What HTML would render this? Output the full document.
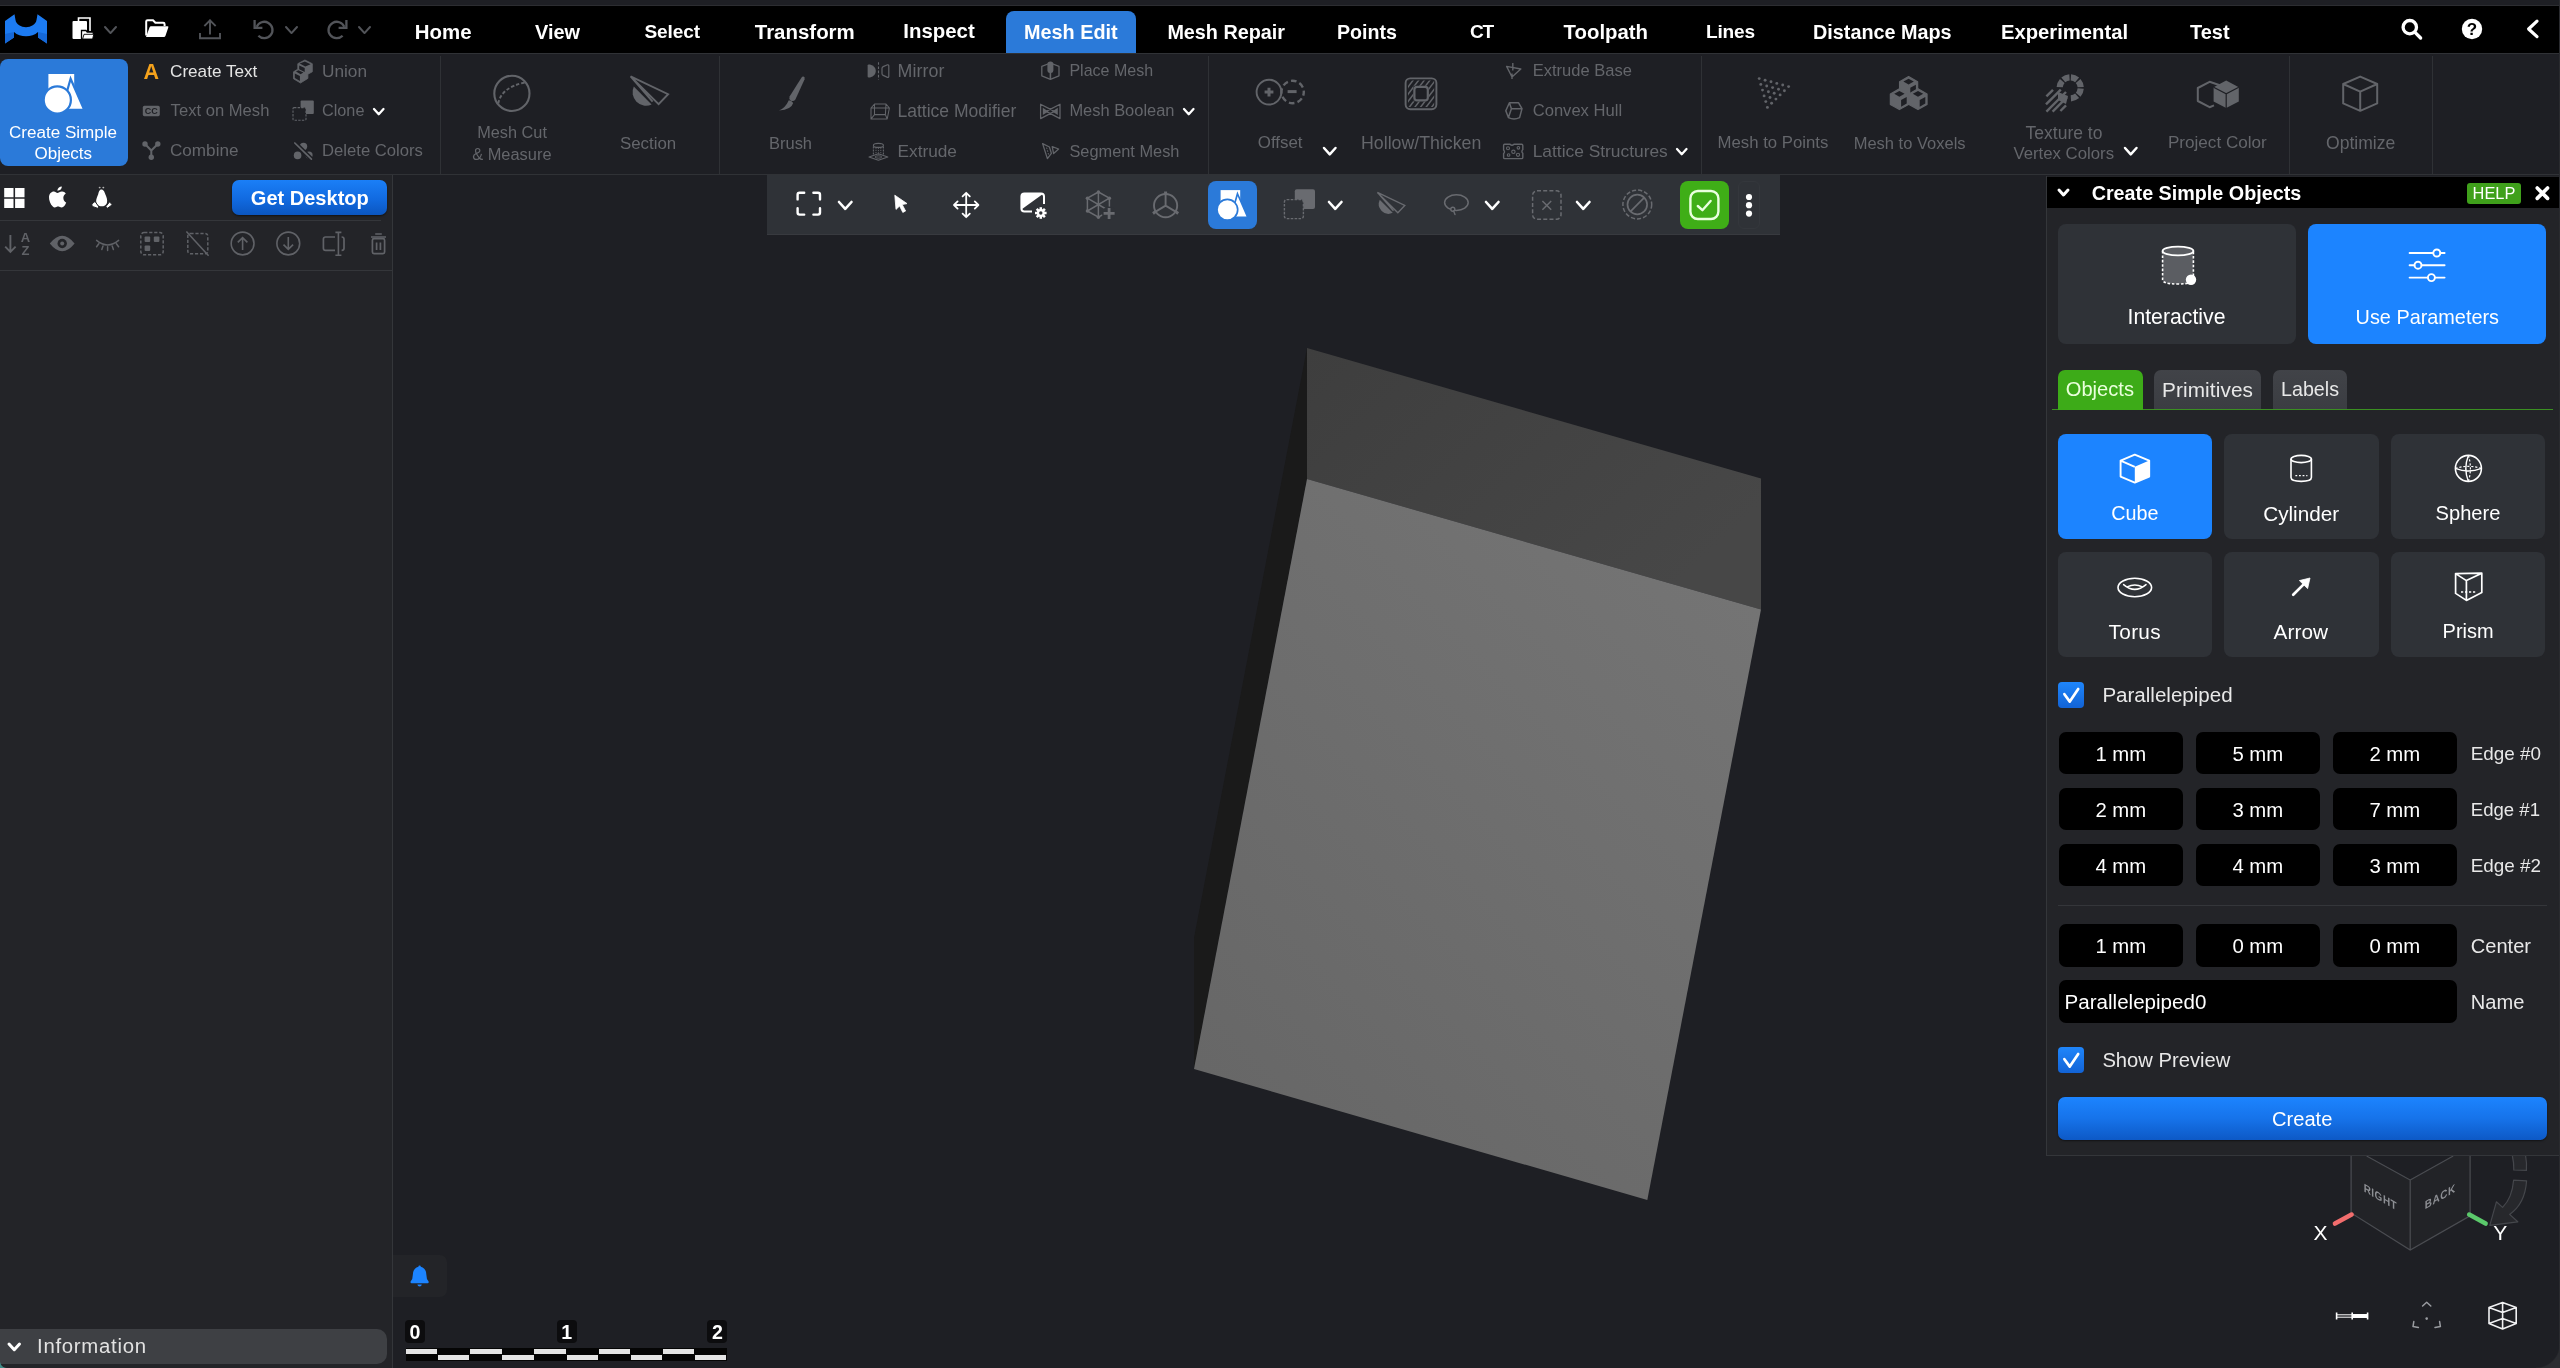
<!DOCTYPE html>
<html lang="en"><head><meta charset="utf-8"><title>MeshInspector - Create Simple Objects</title>
<style>
html,body{margin:0;padding:0;}
body{width:2560px;height:1368px;overflow:hidden;background:#1e1f24;position:relative;font-family:'Liberation Sans', sans-serif;}
#app{position:absolute;left:0;top:0;width:2560px;height:1368px;overflow:hidden;will-change:transform;}
#app div,#app span,#app svg{position:absolute;}
#app span{white-space:pre;}
#app svg{overflow:visible;}
</style></head>
<body><div id="app">
<div style="left:0px;top:0px;width:2560px;height:5px;background:#1e1f24;"></div>
<div style="left:0px;top:5px;width:2560px;height:1px;background:#2c2d31;"></div>
<div style="left:0px;top:6px;width:2560px;height:47px;background:#000;"></div>
<div style="left:0px;top:53px;width:2560px;height:1px;background:#303236;"></div>
<div style="left:0px;top:54px;width:2560px;height:120px;background:#1e1f24;"></div>
<div style="left:0px;top:174px;width:2560px;height:1px;background:#303236;"></div>
<svg style="left:0;top:0" width="2560" height="1368" viewBox="0 0 2560 1368"><defs><linearGradient id="gf" x1="0.1" y1="1" x2="0.9" y2="0"><stop offset="0" stop-color="#666666"/><stop offset="1" stop-color="#757575"/></linearGradient><linearGradient id="gt" x1="0" y1="0" x2="1" y2="0.6"><stop offset="0" stop-color="#3e3e3e"/><stop offset="1" stop-color="#474747"/></linearGradient></defs><polygon points="1307,348 1307,479 1194,1069 1194,938" fill="#1a1a1a"/><polygon points="1307,348 1761,478.5 1761,609.5 1307,479" fill="url(#gt)"/><polygon points="1307,479 1761,609.5 1647.3,1200 1194,1069" fill="url(#gf)"/></svg>
<div style="left:0px;top:175px;width:392px;height:1193px;background:#232428;"></div>
<div style="left:392px;top:175px;width:1px;height:1193px;background:#34363a;"></div>
<svg style="left:0;top:0" width="60" height="53" viewBox="0 0 60 53"><path d="M5,21 L14.5,14.2 L15.5,20 C17,29.5 35,29.5 36.5,20 L37.5,14.2 L47,21 L47,43.6 L38,37.6 L38,32 C32,37.8 20,37.8 14,32 L14,37.6 L5,43.6 Z" fill="#1c7bf2"/><path d="M5,34 L14,32 L14,37.6 L5,43.6 Z M47,34 L38,32 L38,37.6 L47,43.6 Z" fill="#1568d8"/></svg>
<svg style="left:70px;top:15px" width="26" height="26" viewBox="70 15 26 26"><path d="M78.5,21 V18 H90 V31" fill="none" stroke="#fff" stroke-width="1.6"/><rect x="72.5" y="21" width="14.5" height="18" rx="1" fill="#fff"/><path d="M81.5,39.5 V30.5 H86 L87.2,32 H93.3 V39.5 Z" fill="#fff" stroke="#000" stroke-width="1.3"/><path d="M82.6,39 L84,34.3 H93.8 L92.6,39 Z" fill="#fff" stroke="#000" stroke-width="0.9"/></svg>
<svg style="left:102.50px;top:25.48px;" width="15" height="10.05" viewBox="0 0 15 10.05"><path d="M2 2 L7.5 8.05 L13 2" fill="none" stroke="#525459" stroke-width="2" stroke-linecap="round" stroke-linejoin="round"/></svg>
<svg style="left:143px;top:17px" width="28" height="24" viewBox="143 17 28 24"><path d="M146.2,35.5 V21.6 Q146.2,20.2 147.6,20.2 H153 L155.4,22.8 H163.2 Q164.6,22.8 164.6,24.2 V26" fill="none" stroke="#fff" stroke-width="2"/><path d="M146,37 L149.6,27.2 Q150,26.2 151,26.2 H167.4 Q168.8,26.2 168.3,27.5 L165.4,36 Q165,37 164,37 Z" fill="#fff"/></svg>
<svg style="left:197px;top:17px" width="28" height="26" viewBox="197 17 28 26"><path d="M210,33.5 V20.5 M205,25.3 L210,20.3 L215,25.3 M200,34 V38.2 H220 V34" fill="none" stroke="#525459" stroke-width="1.9" stroke-linecap="square" stroke-linejoin="miter"/></svg>
<svg style="left:250px;top:15px" width="28" height="28" viewBox="250 15 28 28"><g transform="translate(264,29.5)"><path d="M-7.3,-2.6 A8.2,8.2 0 1 1 -5.6,6.2" fill="none" stroke="#525459" stroke-width="2.3"/><path d="M-9.4,-9.6 V-1.6 H-1.6" fill="none" stroke="#525459" stroke-width="2.3"/></g></svg>
<svg style="left:283.50px;top:25.48px;" width="15" height="10.05" viewBox="0 0 15 10.05"><path d="M2 2 L7.5 8.05 L13 2" fill="none" stroke="#525459" stroke-width="2" stroke-linecap="round" stroke-linejoin="round"/></svg>
<svg style="left:323px;top:15px" width="28" height="28" viewBox="323 15 28 28"><g transform="translate(337,29.5) scale(-1,1)"><path d="M-7.3,-2.6 A8.2,8.2 0 1 1 -5.6,6.2" fill="none" stroke="#525459" stroke-width="2.3"/><path d="M-9.4,-9.6 V-1.6 H-1.6" fill="none" stroke="#525459" stroke-width="2.3"/></g></svg>
<svg style="left:356.50px;top:25.48px;" width="15" height="10.05" viewBox="0 0 15 10.05"><path d="M2 2 L7.5 8.05 L13 2" fill="none" stroke="#525459" stroke-width="2" stroke-linecap="round" stroke-linejoin="round"/></svg>
<div style="left:1006px;top:11px;width:130px;height:42px;background:#2b7ad9;border-radius:8px 8px 0 0;"></div>
<span style="left:414.80px;top:18.34px;font-size:20.46px;line-height:27px;color:#fff;font-weight:700;">Home</span>
<span style="left:535.00px;top:18.83px;font-size:19.92px;line-height:26px;color:#fff;font-weight:700;">View</span>
<span style="left:644.50px;top:19.32px;font-size:19.08px;line-height:25px;color:#fff;font-weight:700;letter-spacing:-0.136px;">Select</span>
<span style="left:754.80px;top:18.34px;font-size:20.45px;line-height:27px;color:#fff;font-weight:700;">Transform</span>
<span style="left:903.30px;top:18.33px;font-size:20.41px;line-height:27px;color:#fff;font-weight:700;">Inspect</span>
<span style="left:1024.00px;top:18.83px;font-size:19.83px;line-height:26px;color:#fff;font-weight:700;">Mesh Edit</span>
<span style="left:1167.40px;top:18.83px;font-size:19.79px;line-height:26px;color:#fff;font-weight:700;">Mesh Repair</span>
<span style="left:1337.00px;top:18.83px;font-size:19.65px;line-height:26px;color:#fff;font-weight:700;">Points</span>
<span style="left:1469.89px;top:19.32px;font-size:19.08px;line-height:25px;color:#fff;font-weight:700;letter-spacing:-1.200px;">CT</span>
<span style="left:1563.60px;top:18.83px;font-size:20.37px;line-height:26px;color:#fff;font-weight:700;">Toolpath</span>
<span style="left:1706.00px;top:19.32px;font-size:19.08px;line-height:25px;color:#fff;font-weight:700;letter-spacing:-0.201px;">Lines</span>
<span style="left:1813.00px;top:18.83px;font-size:19.81px;line-height:26px;color:#fff;font-weight:700;">Distance Maps</span>
<span style="left:2001.00px;top:18.83px;font-size:20.24px;line-height:26px;color:#fff;font-weight:700;">Experimental</span>
<span style="left:2190.00px;top:18.83px;font-size:19.94px;line-height:26px;color:#fff;font-weight:700;">Test</span>
<svg style="left:2398px;top:16px" width="28" height="28" viewBox="2398 16 28 28"><circle cx="2409.8" cy="27.2" r="6.7" fill="none" stroke="#fff" stroke-width="3.3"/><path d="M2415,32.4 L2420.6,38" stroke="#fff" stroke-width="3.4" stroke-linecap="round"/></svg>
<svg style="left:2458px;top:15px" width="28" height="28" viewBox="2458 15 28 28"><circle cx="2472" cy="29" r="10.2" fill="#fff"/></svg>
<span style="left:2466.80px;top:18.50px;font-size:17.00px;line-height:22px;color:#000;font-weight:700;">?</span>
<svg style="left:2520px;top:15px" width="24" height="28" viewBox="2520 15 24 28"><path d="M2537,21.2 L2528.6,29 L2537,36.6" fill="none" stroke="#fff" stroke-width="3.2" stroke-linecap="round" stroke-linejoin="round"/></svg>
<div style="left:0px;top:59px;width:128px;height:107px;background:#2b7ad9;border-radius:8px;"></div>
<svg style="left:37px;top:69px" width="52" height="48" viewBox="37 69 52 48"><polygon points="48.40,74.00 74.20,74.00 74.20,97.60 48.40,97.60" fill="#fff"/><polygon points="70.60,78.80 84.20,109.80 61.80,109.80" fill="#fff" stroke="#2b7ad9" stroke-width="2.20"/><circle cx="57.30" cy="99.90" r="13.60" fill="#fff" stroke="#2b7ad9" stroke-width="2.20"/></svg>
<span style="left:9.00px;top:121.80px;font-size:17.06px;line-height:22px;color:#fff;">Create Simple</span>
<span style="left:34.50px;top:143.20px;font-size:16.98px;line-height:22px;color:#fff;">Objects</span>
<div style="left:440px;top:56px;width:1px;height:118px;background:#2f3135;"></div>
<div style="left:719px;top:56px;width:1px;height:118px;background:#2f3135;"></div>
<div style="left:1208px;top:56px;width:1px;height:118px;background:#2f3135;"></div>
<div style="left:1701px;top:56px;width:1px;height:118px;background:#2f3135;"></div>
<div style="left:2289px;top:56px;width:1px;height:118px;background:#2f3135;"></div>
<div style="left:2432px;top:56px;width:1px;height:118px;background:#2f3135;"></div>
<span style="left:143.50px;top:57.65px;font-size:21.50px;line-height:28px;color:#f5a21c;font-weight:700;">A</span>
<span style="left:170.00px;top:60.00px;font-size:17.15px;line-height:22px;color:#e4e4e4;">Create Text</span>
<svg style="left:141px;top:103px" width="21" height="16" viewBox="141 103 21 16"><rect x="142.8" y="105.8" width="17" height="10.4" rx="1.6" fill="#626469"/></svg>
<span style="left:144.80px;top:105.15px;font-size:9.00px;line-height:12px;color:#1e1f24;font-weight:700;">CC</span>
<span style="left:170.60px;top:99.99px;font-size:16.63px;line-height:22px;color:#64666b;">Text on Mesh</span>
<svg style="left:141px;top:140px" width="21" height="22" viewBox="141 140 21 22"><path d="M145,144 L151.3,150.5 L157.8,144 M151.3,150.5 V157" fill="none" stroke="#626469" stroke-width="2"/><circle cx="145" cy="144" r="2.7" fill="#626469"/><circle cx="157.8" cy="144" r="2.7" fill="#626469"/><circle cx="151.3" cy="157.2" r="2.7" fill="#626469"/></svg>
<span style="left:170.00px;top:140.10px;font-size:17.13px;line-height:22px;color:#64666b;">Combine</span>
<svg style="left:291px;top:58px" width="24" height="27" viewBox="291 58 24 27"><path d="M304.9,60 L312.3,63.7 V71.8 L307.9,74.2 V78.4 L300.5,83 L293.5,78.8 V71.8 L297.8,69.2 V63.7 Z" fill="#626469" stroke="#626469" stroke-width="0.8" stroke-linejoin="round"/><path d="M304.9,61.4 L310.6,64.2 L305.3,66.4 L299.7,63.6 Z M299.2,65.4 L304.7,68 V71.9 L299.2,69.3 Z M296,71.5 L298.4,70.2 L303.4,72.6 L300.6,74.2 Z M294.8,73.6 L299.9,76 V80.9 L294.8,78 Z" fill="#1e1f24"/></svg>
<span style="left:322.00px;top:60.00px;font-size:17.24px;line-height:22px;color:#64666b;">Union</span>
<svg style="left:291px;top:98px" width="25" height="25" viewBox="291 98 25 25"><rect x="300.6" y="100.6" width="13.2" height="13.4" rx="1" fill="#626469"/><rect x="293" y="107.6" width="13" height="12.6" rx="1" fill="#1e1f24" stroke="#626469" stroke-width="1.1" stroke-dasharray="2.4 1.2"/></svg>
<span style="left:322.00px;top:100.49px;font-size:16.24px;line-height:21px;color:#64666b;">Clone</span>
<svg style="left:372.25px;top:106.99px;" width="13.5" height="9.225000000000001" viewBox="0 0 13.5 9.225000000000001"><path d="M2 2 L6.75 7.2250000000000005 L11.5 2" fill="none" stroke="#fff" stroke-width="2.3" stroke-linecap="round" stroke-linejoin="round"/></svg>
<svg style="left:291px;top:140px" width="25" height="23" viewBox="291 140 25 23"><circle cx="303.5" cy="146.4" r="3.7" fill="#626469"/><circle cx="297.6" cy="155.4" r="3.8" fill="#626469"/><circle cx="309" cy="155" r="3.6" fill="#626469"/><path d="M294.8,143 L311.4,159.2" stroke="#1e1f24" stroke-width="4.6"/><path d="M294.8,143 L311.4,159.2" stroke="#626469" stroke-width="1.7" stroke-linecap="round"/></svg>
<span style="left:322.00px;top:140.09px;font-size:16.66px;line-height:22px;color:#64666b;">Delete Colors</span>
<svg style="left:490px;top:72px" width="44" height="44" viewBox="490 72 44 44"><circle cx="511.9" cy="93.4" r="17.6" fill="none" stroke="#626469" stroke-width="2.1"/><path d="M498.3,103.5 Q501,87.5 525.2,82.4" fill="none" stroke="#626469" stroke-width="1.9" stroke-dasharray="3.4 2"/></svg>
<span style="left:477.20px;top:122.49px;font-size:16.31px;line-height:21px;color:#64666b;">Mesh Cut</span>
<span style="left:472.20px;top:143.89px;font-size:16.42px;line-height:21px;color:#64666b;">&amp; Measure</span>
<svg style="left:626px;top:72px" width="48" height="38" viewBox="626 72 48 38"><path d="M630.60,76.40 L668.10,94.20 L658.60,104.20 Z M630.60,76.40 L652.60,101.60" fill="none" stroke="#626469" stroke-width="1.90" stroke-linejoin="miter"/><path d="M633.80,86.60 L651.60,104.40 A13.40,13.40 0 0 1 633.80,86.60 Z" fill="#626469"/></svg>
<span style="left:620.00px;top:132.59px;font-size:16.86px;line-height:22px;color:#64666b;">Section</span>
<svg style="left:774px;top:72px" width="36" height="42" viewBox="774 72 36 42"><path d="M803.4,76.6 Q805.2,77 804.6,79.2 L795.4,99.6 Q793.4,102 790.6,100.6 Q788.6,99 789.6,96.4 L801.4,77.8 Q802.4,76.4 803.4,76.6 Z" fill="#626469"/><path d="M788.8,100.2 Q791.6,100.4 793.2,103 Q791.4,109.6 779,110.6 Q785.6,107.6 788.8,100.2 Z" fill="#626469"/></svg>
<span style="left:769.00px;top:132.89px;font-size:16.48px;line-height:21px;color:#64666b;">Brush</span>
<svg style="left:865px;top:60px" width="28" height="22" viewBox="865 60 28 22"><path d="M867.6,65.6 Q867.6,64.6 868.8,64.6 H870 Q875.8,66.4 875.8,71 Q875.8,75.8 870,77.6 H868.8 Q867.6,77.6 867.6,76.6 Z" fill="#626469"/><path d="M878.5,62.2 V79.6" fill="none" stroke="#626469" stroke-width="1.1" stroke-dasharray="2.6 1.6"/><path d="M888.8,66 V76.2 Q888.8,77.6 887.4,77.4 L883.2,75.4 Q882,74.8 882,73.4 V68.6 Q882,67.2 883.2,66.6 L887.4,64.8 Q888.8,64.6 888.8,66 Z" fill="none" stroke="#626469" stroke-width="1.2"/></svg>
<span style="left:897.50px;top:59.50px;font-size:17.81px;line-height:23px;color:#64666b;letter-spacing:0.092px;">Mirror</span>
<svg style="left:867px;top:100px" width="26" height="22" viewBox="867 100 26 22"><path d="M871,119 V108 L874.5,104 H886 L889.4,108 L887.2,119 Z M871,108 H889.4 M874.5,104 V114.6 H885.4 L886,104 M874.5,114.6 L871,119 M885.4,114.6 L887.2,119" fill="none" stroke="#626469" stroke-width="1.05" stroke-linejoin="round"/></svg>
<span style="left:897.50px;top:99.50px;font-size:17.52px;line-height:23px;color:#64666b;">Lattice Modifier</span>
<svg style="left:866px;top:140px" width="26" height="22" viewBox="866 140 26 22"><path d="M873.4,146.6 V154.6 M883.4,146.6 V154.6" fill="none" stroke="#626469" stroke-width="1.1" stroke-dasharray="2 1"/><ellipse cx="878.4" cy="145.4" rx="5" ry="2" fill="none" stroke="#626469" stroke-width="1.1"/><ellipse cx="878.4" cy="157" rx="3.4" ry="1.2" fill="none" stroke="#626469" stroke-width="0.9"/><path d="M876,147.6 V155 M878.4,147.8 V155 M880.8,147.6 V155" fill="none" stroke="#626469" stroke-width="0.9" stroke-dasharray="1.2 1"/><path d="M869,157 L878.4,153.8 L887.8,157 L878.4,160.2 Z" fill="none" stroke="#626469" stroke-width="1.1" stroke-linejoin="round"/></svg>
<span style="left:897.50px;top:140.10px;font-size:17.25px;line-height:22px;color:#64666b;">Extrude</span>
<svg style="left:1038px;top:59px" width="25" height="24" viewBox="1038 59 25 24"><path d="M1041.8,66.4 L1050.4,63 L1059,66.4 V75.8 L1050.4,79.4 L1041.8,75.8 Z" fill="none" stroke="#626469" stroke-width="1.3" stroke-linejoin="round"/><path d="M1047.4,64.2 Q1047.4,61.4 1050.4,61.4 Q1053.4,61.4 1053.4,64.2 V70.4 Q1053.4,72.4 1051.2,73 V79 H1049.6 V73 Q1047.4,72.4 1047.4,70.4 Z" fill="#626469"/></svg>
<span style="left:1069.40px;top:60.48px;font-size:16.02px;line-height:21px;color:#64666b;">Place Mesh</span>
<svg style="left:1037px;top:100px" width="27" height="22" viewBox="1037 100 27 22"><path d="M1040.6,104.2 V118.6 L1054.4,111.4 Z M1060,104.2 V118.6 L1046.2,111.4 Z" fill="none" stroke="#626469" stroke-width="1.25" stroke-linejoin="round"/><path d="M1042.8,107.8 L1048.4,111.4 L1042.8,115 Z M1057.8,107.8 L1052.2,111.4 L1057.8,115 Z" fill="#626469"/></svg>
<span style="left:1069.40px;top:100.49px;font-size:16.44px;line-height:21px;color:#64666b;">Mesh Boolean</span>
<svg style="left:1182.05px;top:106.99px;" width="13.5" height="9.225000000000001" viewBox="0 0 13.5 9.225000000000001"><path d="M2 2 L6.75 7.2250000000000005 L11.5 2" fill="none" stroke="#fff" stroke-width="2.3" stroke-linecap="round" stroke-linejoin="round"/></svg>
<svg style="left:1038px;top:140px" width="25" height="23" viewBox="1038 140 25 23"><path d="M1042.6,143.6 L1049.4,147 L1051.4,153.4 L1047.4,158.6 Z M1052.2,146.6 L1058.6,149 L1053.6,153.6 Z" fill="none" stroke="#626469" stroke-width="1.3" stroke-linejoin="round"/><path d="M1046.6,147.6 L1048.6,154.6" fill="none" stroke="#626469" stroke-width="1" stroke-dasharray="1.6 1.2"/></svg>
<span style="left:1069.40px;top:140.59px;font-size:16.37px;line-height:21px;color:#64666b;">Segment Mesh</span>
<svg style="left:1252px;top:74px" width="58" height="36" viewBox="1252 74 58 36"><circle cx="1269" cy="92.1" r="12.4" fill="none" stroke="#626469" stroke-width="1.9"/><path d="M1264.6,92.1 H1273.4 M1269,87.7 V96.5" fill="none" stroke="#626469" stroke-width="3"/><circle cx="1292.6" cy="92" r="11.2" fill="none" stroke="#626469" stroke-width="2.4" stroke-dasharray="5.6 3.2" stroke-dashoffset="2"/><path d="M1287.6,91.6 H1296.6" fill="none" stroke="#626469" stroke-width="3"/></svg>
<span style="left:1257.80px;top:132.39px;font-size:16.89px;line-height:22px;color:#64666b;">Offset</span>
<svg style="left:1321.65px;top:145.84px;" width="15.5" height="10.325" viewBox="0 0 15.5 10.325"><path d="M2 2 L7.75 8.325 L13.5 2" fill="none" stroke="#fff" stroke-width="2.5" stroke-linecap="round" stroke-linejoin="round"/></svg>
<svg style="left:1402px;top:75px" width="39" height="38" viewBox="1402 75 39 38"><defs><clipPath id="hcp"><path clip-rule="evenodd" d="M1408,80.6 H1434.2 V107 H1408 Z M1413.4,85.8 V101.4 H1428.8 V85.8 Z"/></clipPath></defs><g clip-path="url(#hcp)"><path d="M1366.4,112 L1392.4,78" fill="none" stroke="#626469" stroke-width="1.5"/><path d="M1372.0,112 L1398.0,78" fill="none" stroke="#626469" stroke-width="1.5"/><path d="M1377.6,112 L1403.6,78" fill="none" stroke="#626469" stroke-width="1.5"/><path d="M1383.2,112 L1409.2,78" fill="none" stroke="#626469" stroke-width="1.5"/><path d="M1388.8,112 L1414.8,78" fill="none" stroke="#626469" stroke-width="1.5"/><path d="M1394.4,112 L1420.4,78" fill="none" stroke="#626469" stroke-width="1.5"/><path d="M1400.0,112 L1426.0,78" fill="none" stroke="#626469" stroke-width="1.5"/><path d="M1405.6,112 L1431.6,78" fill="none" stroke="#626469" stroke-width="1.5"/><path d="M1411.2,112 L1437.2,78" fill="none" stroke="#626469" stroke-width="1.5"/><path d="M1416.8,112 L1442.8,78" fill="none" stroke="#626469" stroke-width="1.5"/><path d="M1422.4,112 L1448.4,78" fill="none" stroke="#626469" stroke-width="1.5"/><path d="M1428.0,112 L1454.0,78" fill="none" stroke="#626469" stroke-width="1.5"/><path d="M1433.6,112 L1459.6,78" fill="none" stroke="#626469" stroke-width="1.5"/><path d="M1439.2,112 L1465.2,78" fill="none" stroke="#626469" stroke-width="1.5"/><path d="M1444.8,112 L1470.8,78" fill="none" stroke="#626469" stroke-width="1.5"/></g><rect x="1405.6" y="78.4" width="30.8" height="30.8" rx="4.6" fill="none" stroke="#626469" stroke-width="1.9"/><rect x="1414.4" y="86.8" width="13.4" height="13.6" rx="2.6" fill="#1e1f24" stroke="#626469" stroke-width="2.2"/></svg>
<span style="left:1361.00px;top:131.90px;font-size:17.76px;line-height:23px;color:#64666b;">Hollow/Thicken</span>
<svg style="left:1502px;top:60px" width="24" height="22" viewBox="1502 60 24 22"><path d="M1506.6,66.4 L1520.8,69 L1512,77 Z M1512.8,63 V70.4 M1512,73.6 V79" fill="none" stroke="#626469" stroke-width="1.4" stroke-linejoin="round"/></svg>
<span style="left:1532.70px;top:60.49px;font-size:16.52px;line-height:21px;color:#64666b;">Extrude Base</span>
<svg style="left:1502px;top:99px" width="24" height="24" viewBox="1502 99 24 24"><path d="M1509.4,102.8 H1518.6 L1522,108.6 L1519.6,117.6 Q1514,120.4 1508.4,117.6 L1505.8,110.8 Z M1509.4,102.8 L1511.4,108.8 H1522 M1511.4,108.8 L1508.4,117.6" fill="none" stroke="#626469" stroke-width="1.5" stroke-linejoin="round"/></svg>
<span style="left:1532.70px;top:99.99px;font-size:16.58px;line-height:22px;color:#64666b;">Convex Hull</span>
<svg style="left:1500px;top:140px" width="27" height="23" viewBox="1500 140 27 23"><path d="M1504.6,144.2 H1510 Q1512,146.2 1514,144.2 H1521.6 Q1522.8,144.2 1522.8,145.4 V149.6 Q1521,151.4 1522.8,153.2 V157.4 Q1522.8,158.6 1521.6,158.6 H1504.6 Q1503.6,158.6 1503.6,157.4 V153.6 Q1505.4,151.8 1503.6,150 V145.4 Q1503.6,144.2 1504.6,144.2 Z" fill="none" stroke="#626469" stroke-width="1.4"/><circle cx="1508" cy="148.2" r="1.5" fill="none" stroke="#626469" stroke-width="1.1"/><circle cx="1513.4" cy="151.8" r="1.7" fill="none" stroke="#626469" stroke-width="1.1"/><circle cx="1518.4" cy="147.8" r="1.3" fill="none" stroke="#626469" stroke-width="1.1"/><circle cx="1508.6" cy="155" r="1.3" fill="none" stroke="#626469" stroke-width="1.1"/><circle cx="1518" cy="154.8" r="1.6" fill="none" stroke="#626469" stroke-width="1.1"/></svg>
<span style="left:1532.70px;top:139.60px;font-size:17.37px;line-height:23px;color:#64666b;">Lattice Structures</span>
<svg style="left:1675.25px;top:146.79px;" width="13.5" height="9.225000000000001" viewBox="0 0 13.5 9.225000000000001"><path d="M2 2 L6.75 7.2250000000000005 L11.5 2" fill="none" stroke="#fff" stroke-width="2.3" stroke-linecap="round" stroke-linejoin="round"/></svg>
<svg style="left:1752px;top:72px" width="44" height="42" viewBox="1752 72 44 42"><circle cx="1759.2" cy="78.6" r="1.45" fill="#626469"/><circle cx="1765.1" cy="80.2" r="1.45" fill="#626469"/><circle cx="1771.0" cy="81.8" r="1.45" fill="#626469"/><circle cx="1776.8" cy="83.4" r="1.45" fill="#626469"/><circle cx="1782.7" cy="85.0" r="1.45" fill="#626469"/><circle cx="1788.6" cy="86.6" r="1.45" fill="#626469"/><circle cx="1760.8" cy="84.4" r="1.45" fill="#626469"/><circle cx="1766.7" cy="86.0" r="1.45" fill="#626469"/><circle cx="1772.6" cy="87.6" r="1.45" fill="#626469"/><circle cx="1778.5" cy="89.2" r="1.45" fill="#626469"/><circle cx="1784.4" cy="90.8" r="1.45" fill="#626469"/><circle cx="1762.5" cy="90.1" r="1.45" fill="#626469"/><circle cx="1768.4" cy="91.7" r="1.45" fill="#626469"/><circle cx="1774.2" cy="93.3" r="1.45" fill="#626469"/><circle cx="1780.1" cy="94.9" r="1.45" fill="#626469"/><circle cx="1764.1" cy="95.9" r="1.45" fill="#626469"/><circle cx="1770.0" cy="97.5" r="1.45" fill="#626469"/><circle cx="1775.9" cy="99.1" r="1.45" fill="#626469"/><circle cx="1765.8" cy="101.6" r="1.45" fill="#626469"/><circle cx="1771.6" cy="103.2" r="1.45" fill="#626469"/><circle cx="1767.4" cy="107.4" r="1.45" fill="#626469"/></svg>
<span style="left:1717.60px;top:132.39px;font-size:16.75px;line-height:22px;color:#64666b;">Mesh to Points</span>
<svg style="left:1885px;top:72px" width="47" height="42" viewBox="1885 72 47 42"><polygon points="1899.552,81.8 1908.6,76.6 1917.648,81.8 1917.648,92.2 1908.6,97.4 1899.552,92.2" fill="#626469" stroke="#626469" stroke-width="1.2" stroke-linejoin="round"/><polygon points="1903.4,81.6 1908.6,78.8 1913.8,81.6 1908.6,84.5" fill="#1e1f24"/><polygon points="1910.3,87.8 1915.9,84.7 1915.9,91.2 1910.3,94.5" fill="#1e1f24"/><polygon points="1890.352,94.0 1899.4,88.8 1908.448,94.0 1908.448,104.4 1899.4,109.60000000000001 1890.352,104.4" fill="#626469" stroke="#626469" stroke-width="1.2" stroke-linejoin="round"/><polygon points="1894.2,93.8 1899.4,91.0 1904.6,93.8 1899.4,96.7" fill="#1e1f24"/><polygon points="1901.1,100.0 1906.7,96.9 1906.7,103.4 1901.1,106.7" fill="#1e1f24"/><polygon points="1908.952,94.0 1918,88.8 1927.048,94.0 1927.048,104.4 1918,109.60000000000001 1908.952,104.4" fill="#626469" stroke="#626469" stroke-width="1.2" stroke-linejoin="round"/><polygon points="1912.8,93.8 1918.0,91.0 1923.2,93.8 1918.0,96.7" fill="#1e1f24"/><polygon points="1919.7,100.0 1925.3,96.9 1925.3,103.4 1919.7,106.7" fill="#1e1f24"/></svg>
<span style="left:1853.70px;top:132.89px;font-size:16.50px;line-height:21px;color:#64666b;">Mesh to Voxels</span>
<svg style="left:2042px;top:70px" width="46" height="46" viewBox="2042 70 46 46"><path d="M2071.1,74.2 A13.6,13.6 0 0 1 2079.1,77.5 L2075.1,82.2 A7.4,7.4 0 0 0 2070.7,80.4 Z" fill="#626469"/><path d="M2080.5,78.9 A13.6,13.6 0 0 1 2083.8,86.9 L2077.6,87.3 A7.4,7.4 0 0 0 2075.8,82.9 Z" fill="#626469"/><path d="M2083.8,88.7 A13.6,13.6 0 0 1 2080.5,96.7 L2075.8,92.7 A7.4,7.4 0 0 0 2077.6,88.3 Z" fill="#626469"/><path d="M2079.1,98.1 A13.6,13.6 0 0 1 2071.1,101.4 L2070.7,95.2 A7.4,7.4 0 0 0 2075.1,93.4 Z" fill="#626469"/><path d="M2056.6,86.9 A13.6,13.6 0 0 1 2059.9,78.9 L2064.6,82.9 A7.4,7.4 0 0 0 2062.8,87.3 Z" fill="#626469"/><path d="M2061.3,77.5 A13.6,13.6 0 0 1 2069.3,74.2 L2069.7,80.4 A7.4,7.4 0 0 0 2065.3,82.2 Z" fill="#626469"/><path d="M2046.4,96.4 L2053,89.8" fill="none" stroke="#626469" stroke-width="2.4"/><path d="M2046,104.4 L2060.8,89.6" fill="none" stroke="#626469" stroke-width="2.4"/><path d="M2046.4,111.6 L2066,92" fill="none" stroke="#626469" stroke-width="2.4"/><path d="M2052.6,111.6 L2067,97.2" fill="none" stroke="#626469" stroke-width="2.4"/><path d="M2060.4,111 L2066,105.4" fill="none" stroke="#626469" stroke-width="2.4"/><path d="M2058,92 L2068,96 L2066,104 L2058,100 Z" fill="#626469"/></svg>
<span style="left:2025.60px;top:121.50px;font-size:17.49px;line-height:23px;color:#64666b;">Texture to</span>
<span style="left:2013.40px;top:143.39px;font-size:16.78px;line-height:22px;color:#64666b;">Vertex Colors</span>
<svg style="left:2123.25px;top:145.84px;" width="15.5" height="10.325" viewBox="0 0 15.5 10.325"><path d="M2 2 L7.75 8.325 L13.5 2" fill="none" stroke="#fff" stroke-width="2.5" stroke-linecap="round" stroke-linejoin="round"/></svg>
<svg style="left:2192px;top:76px" width="52" height="36" viewBox="2192 76 52 36"><path d="M2222,86 L2209.6,81.8 L2197.8,88 V101 L2209.6,107.2 L2214,105.4" fill="none" stroke="#626469" stroke-width="2" stroke-linejoin="round"/><polygon points="2226.2,80.6 2238.8,87.2 2238.8,101.4 2226.2,108 2213.6,101.4 2213.6,87.2" fill="#626469"/><path d="M2213.6,87.2 L2226.2,93.8 L2238.8,87.2 M2226.2,93.8 V108" fill="none" stroke="#1e1f24" stroke-width="1.2"/></svg>
<span style="left:2167.90px;top:132.40px;font-size:17.11px;line-height:22px;color:#64666b;">Project Color</span>
<svg style="left:2338px;top:72px" width="45" height="44" viewBox="2338 72 45 44"><path d="M2360.2,76.6 L2377.2,84 V103.4 L2360.2,110.8 L2343.2,103.4 V84 Z M2343.2,84 L2360.2,91.6 L2377.2,84 M2360.2,91.6 V110.8" fill="none" stroke="#626469" stroke-width="2" stroke-linejoin="round"/></svg>
<span style="left:2326.00px;top:131.90px;font-size:17.56px;line-height:23px;color:#64666b;">Optimize</span>
<svg style="left:3px;top:186px" width="24" height="24" viewBox="3 186 24 24"><path d="M4.2,188 H13.5 V197.2 H4.2 Z M15.1,188 H24.5 V197.2 H15.1 Z M4.2,198.8 H13.5 V208 H4.2 Z M15.1,198.8 H24.5 V208 H15.1 Z" fill="#fff"/></svg>
<svg style="left:46px;top:184px" width="23" height="26" viewBox="46 184 23 26"><path d="M57.4,190.8 C57.4,188.6 59.4,186.6 61.8,186.6 C62,188.8 60,190.8 57.4,190.8 Z" fill="#fff"/><path d="M57.4,193 C58.6,193 60,191.2 62.2,191.4 C63.6,191.5 65,192.2 65.8,193.6 C63.6,195 63.2,197 63.4,198.4 C63.6,200.4 64.8,201.8 66.2,202.4 C65.6,204 64.6,205.8 63.4,206.8 C62.2,207.8 61,207.6 59.8,207 C58.6,206.5 57.6,206.4 56.4,207 C55.2,207.6 54,207.8 52.8,206.6 C50.6,204.4 48.8,200.4 49,197 C49.2,193.6 51.4,191.4 53.8,191.4 C55.4,191.4 56.4,193 57.4,193 Z" fill="#fff"/></svg>
<svg style="left:90px;top:184px" width="24" height="26" viewBox="90 184 24 26"><path d="M101.3,189.4 C103.6,189.4 104.6,192 105.4,194.4 C106.6,197.2 107.6,199.4 107,202.4 C106.4,205.4 103.8,206.2 101.4,206.2 C99,206.2 96.6,205.4 96.2,202 C95.8,199 97.4,196.6 98.2,194.2 C98.8,192 99.4,189.4 101.3,189.4 Z" fill="#fff"/><path d="M91.8,204 L95,201.4 L99,207 L97.4,208.2 L92.2,206.4 Z M109.6,201.8 L112.2,204.8 L107.6,208.2 L105.8,206.6 Z" fill="#fff" stroke="#232428" stroke-width="1" stroke-linejoin="round"/><ellipse cx="99.7" cy="187.6" rx="1" ry="0.8" fill="#b4b4b4"/><ellipse cx="103.3" cy="187.6" rx="1" ry="0.8" fill="#b4b4b4"/></svg>
<div style="left:232px;top:180px;width:155px;height:35px;background:linear-gradient(#1b7ff7,#116ae0 55%,#0b56c0);border-radius:7px;box-shadow:0 1px 2px rgba(0,0,0,.5);"></div>
<span style="left:250.80px;top:185.03px;font-size:20.04px;line-height:26px;color:#fff;font-weight:700;">Get Desktop</span>
<div style="left:0px;top:220px;width:381px;height:1px;background:#34363a;"></div>
<div style="left:0px;top:270px;width:392px;height:1px;background:#34363a;"></div>
<svg style="left:2px;top:230px" width="18" height="28" viewBox="2 230 18 28"><path d="M10.4,235 V251.6 M5.2,246.6 L10.4,251.8 L15.6,246.6" fill="none" stroke="#606267" stroke-width="1.9"/></svg>
<span style="left:20.80px;top:229.05px;font-size:13.00px;line-height:17px;color:#606267;font-weight:700;">A</span>
<span style="left:21.40px;top:242.05px;font-size:13.00px;line-height:17px;color:#606267;font-weight:700;">Z</span>
<svg style="left:48px;top:232px" width="29" height="23" viewBox="48 232 29 23"><path d="M49.8,243.5 Q62.2,228 74.6,243.5 Q62.2,259 49.8,243.5 Z" fill="#606267"/><circle cx="62.2" cy="243.5" r="4.7" fill="#232428"/><circle cx="62.2" cy="243.5" r="2" fill="#606267"/></svg>
<svg style="left:93px;top:236px" width="29" height="18" viewBox="93 236 29 18"><path d="M96.6,240.4 Q107.6,249.6 118.6,240.4 M98.8,243.8 L96.6,246.8 M103,246 L101.8,249.6 M107.6,246.8 V250.4 M112.2,246 L113.4,249.6 M116.4,243.8 L118.6,246.8" fill="none" stroke="#606267" stroke-width="1.5" stroke-linecap="round"/></svg>
<svg style="left:138px;top:230px" width="28" height="28" viewBox="138 230 28 28"><rect x="140.8" y="232.6" width="22.4" height="22.2" rx="3.4" fill="none" stroke="#606267" stroke-width="1.5" stroke-dasharray="3.2 1.8"/><rect x="144.6" y="236.4" width="5.6" height="5.6" rx="1" fill="#606267"/><rect x="153.8" y="236.4" width="5.6" height="5.6" rx="1" fill="#606267"/><rect x="144.6" y="245.4" width="5.6" height="5.6" rx="1" fill="#606267"/></svg>
<svg style="left:184px;top:230px" width="27" height="28" viewBox="184 230 27 28"><rect x="187.8" y="233.4" width="20" height="20.4" rx="2.6" fill="none" stroke="#606267" stroke-width="1.5" stroke-dasharray="3.2 1.8"/><path d="M186.4,231.6 L208.6,255.8" fill="none" stroke="#606267" stroke-width="1.5"/></svg>
<svg style="left:228px;top:229px" width="29" height="29" viewBox="228 229 29 29"><circle cx="242.6" cy="243.5" r="11.4" fill="none" stroke="#606267" stroke-width="1.6"/><path d="M242.6,250 V238 M237.8,242.4 L242.6,237.6 L247.4,242.4" fill="none" stroke="#606267" stroke-width="1.6"/></svg>
<svg style="left:274px;top:229px" width="29" height="29" viewBox="274 229 29 29"><circle cx="288.3" cy="243.5" r="11.4" fill="none" stroke="#606267" stroke-width="1.6"/><path d="M288.3,237 V249 M283.5,244.6 L288.3,249.4 L293.1,244.6" fill="none" stroke="#606267" stroke-width="1.6"/></svg>
<svg style="left:320px;top:230px" width="27" height="28" viewBox="320 230 27 28"><path d="M335,237 H325.6 Q323.4,237 323.4,239.2 V248.2 Q323.4,250.4 325.6,250.4 H335 M341.6,237 Q344,237 344,239.2 V248.2 Q344,250.4 341.6,250.4" fill="none" stroke="#606267" stroke-width="1.7"/><path d="M338.4,232.4 V255.2 M335.4,232.4 H341.4 M335.4,255.2 H341.4" fill="none" stroke="#606267" stroke-width="1.6"/></svg>
<svg style="left:368px;top:230px" width="22" height="28" viewBox="368 230 22 28"><path d="M371,237 H386 M375.2,234 H381.8" fill="none" stroke="#606267" stroke-width="1.7"/><rect x="372.4" y="238.6" width="12.2" height="15" rx="1.6" fill="none" stroke="#606267" stroke-width="1.7"/><path d="M376.6,242.4 V250 M380.4,242.4 V250" fill="none" stroke="#606267" stroke-width="1.7"/></svg>
<div style="left:0px;top:1329px;width:387px;height:35px;background:#3e4044;border-radius:0 10px 10px 0;"></div>
<svg style="left:7.05px;top:1341.91px;" width="14.5" height="9.775" viewBox="0 0 14.5 9.775"><path d="M2 2 L7.25 7.775 L12.5 2" fill="none" stroke="#fff" stroke-width="3" stroke-linecap="round" stroke-linejoin="round"/></svg>
<span style="left:37.00px;top:1333.43px;font-size:20.35px;line-height:26px;color:#e2e2e2;letter-spacing:0.726px;">Information</span>
<div style="left:767px;top:175px;width:1013px;height:60px;background:#2f3237;"></div>
<div style="left:767px;top:234px;width:1013px;height:1px;background:#383a3f;"></div>
<svg style="left:793px;top:188px" width="32" height="32" viewBox="793 188 32 32"><path d="M797.6,199.4 V194.8 Q797.6,192.8 799.6,192.8 H804.2 M813.4,192.8 H818 Q820,192.8 820,194.8 V199.4 M820,208.2 V212.6 Q820,214.6 818,214.6 H813.4 M804.2,214.6 H799.6 Q797.6,214.6 797.6,212.6 V208.2" fill="none" stroke="#fff" stroke-width="2.4" stroke-linecap="round"/></svg>
<svg style="left:836.95px;top:199.76px;" width="16.5" height="10.875" viewBox="0 0 16.5 10.875"><path d="M2 2 L8.25 8.875 L14.5 2" fill="none" stroke="#fff" stroke-width="2.6" stroke-linecap="round" stroke-linejoin="round"/></svg>
<svg style="left:890px;top:192px" width="22" height="24" viewBox="890 192 22 24"><path d="M894.8,195.2 L907,203.6 L902.2,204.6 L905.6,211 L902.8,212.4 L899.6,206 L896,209.4 Z" fill="#fff" stroke="#fff" stroke-width="0.8" stroke-linejoin="round"/></svg>
<svg style="left:950px;top:189px" width="33" height="33" viewBox="950 189 33 33"><path d="M966.2,193 V217 M954.2,205 H978.2 M962.6,196.4 L966.2,192.8 L969.8,196.4 M962.6,213.6 L966.2,217.2 L969.8,213.6 M957.6,201.4 L954,205 L957.6,208.6 M974.8,201.4 L978.4,205 L974.8,208.6" fill="none" stroke="#fff" stroke-width="1.8" stroke-linecap="round" stroke-linejoin="round"/></svg>
<svg style="left:1017px;top:189px" width="33" height="33" viewBox="1017 189 33 33"><path d="M1024.4,193.4 H1041 Q1044,193.4 1044,196.4 V204 M1032,211.6 H1024.4 Q1021.4,211.6 1021.4,208.6 V196.4 Q1021.4,193.4 1024.4,193.4" fill="none" stroke="#fff" stroke-width="2"/><path d="M1021.4,209.6 V196.4 Q1021.4,193.4 1024.4,193.4 H1043.6 Z" fill="#fff"/><circle cx="1040.8" cy="213" r="7.4" fill="#2f3237"/><path d="M1043.80,213.00 L1046.60,213.00" stroke="#fff" stroke-width="2.5"/><path d="M1042.92,215.12 L1044.90,217.10" stroke="#fff" stroke-width="2.5"/><path d="M1040.80,216.00 L1040.80,218.80" stroke="#fff" stroke-width="2.5"/><path d="M1038.68,215.12 L1036.70,217.10" stroke="#fff" stroke-width="2.5"/><path d="M1037.80,213.00 L1035.00,213.00" stroke="#fff" stroke-width="2.5"/><path d="M1038.68,210.88 L1036.70,208.90" stroke="#fff" stroke-width="2.5"/><path d="M1040.80,210.00 L1040.80,207.20" stroke="#fff" stroke-width="2.5"/><path d="M1042.92,210.88 L1044.90,208.90" stroke="#fff" stroke-width="2.5"/><circle cx="1040.8" cy="213" r="3.9" fill="#fff"/><circle cx="1040.8" cy="213" r="1.7" fill="#2f3237"/></svg>
<svg style="left:1083px;top:188px" width="35" height="34" viewBox="1083 188 35 34"><path d="M1098.4,192 L1109.4,198.2 V211 L1098.4,217.2 L1087.4,211 V198.2 Z M1087.4,198.2 L1109.4,211 M1109.4,198.2 L1087.4,211 M1098.4,192 V217.2" fill="none" stroke="#696b70" stroke-width="1.5" stroke-linejoin="round"/><circle cx="1098.4" cy="192" r="1.7" fill="#696b70"/><circle cx="1109.4" cy="198.2" r="1.7" fill="#696b70"/><circle cx="1087.4" cy="198.2" r="1.7" fill="#696b70"/><circle cx="1087.4" cy="211" r="1.7" fill="#696b70"/><circle cx="1098.4" cy="217.2" r="1.7" fill="#696b70"/><circle cx="1098.4" cy="204.6" r="1.7" fill="#696b70"/><circle cx="1109" cy="213.4" r="7" fill="#2f3237"/><path d="M1103.6,213.4 H1114.6 M1109.1,208 V219" fill="none" stroke="#696b70" stroke-width="2.8"/></svg>
<svg style="left:1150px;top:189px" width="32" height="33" viewBox="1150 189 32 33"><circle cx="1165.6" cy="205.6" r="11.6" fill="none" stroke="#696b70" stroke-width="1.9"/><path d="M1165.6,192.4 V205.6 L1154.4,212.4 M1165.6,205.6 L1176.8,212.4" fill="none" stroke="#696b70" stroke-width="1.9"/><path d="M1153,213.4 L1155.6,211.6 M1178.2,213.4 L1175.6,211.6 M1165.6,191.4 V194" fill="none" stroke="#696b70" stroke-width="3"/></svg>
<div style="left:1208px;top:181px;width:49px;height:48px;background:#2b7ad9;border-radius:8px;"></div>
<svg style="left:1212px;top:186px" width="40" height="37" viewBox="1212 186 40 37"><polygon points="1220.60,190.10 1240.20,190.10 1240.20,208.04 1220.60,208.04" fill="#fff"/><polygon points="1237.47,193.75 1247.80,217.31 1230.78,217.31" fill="#fff" stroke="#2b7ad9" stroke-width="1.67"/><circle cx="1227.36" cy="209.79" r="10.34" fill="#fff" stroke="#2b7ad9" stroke-width="1.67"/></svg>
<svg style="left:1281px;top:186px" width="37" height="36" viewBox="1281 186 37 36"><rect x="1294.8" y="189.2" width="20.2" height="19.8" rx="2" fill="#696b70"/><rect x="1284.4" y="199.6" width="19" height="19" rx="2.4" fill="#2f3237" stroke="#696b70" stroke-width="1.4" stroke-dasharray="2.6 1.3"/></svg>
<svg style="left:1326.75px;top:199.76px;" width="16.5" height="10.875" viewBox="0 0 16.5 10.875"><path d="M2 2 L8.25 8.875 L14.5 2" fill="none" stroke="#fff" stroke-width="2.6" stroke-linecap="round" stroke-linejoin="round"/></svg>
<svg style="left:1373px;top:188px" width="37" height="32" viewBox="1373 188 37 32"><path d="M1377.40,192.40 L1404.78,205.39 L1397.84,212.69 Z M1377.40,192.40 L1393.46,210.80" fill="none" stroke="#696b70" stroke-width="1.39" stroke-linejoin="miter"/><path d="M1379.74,199.85 L1392.73,212.84 A9.78,9.78 0 0 1 1379.74,199.85 Z" fill="#696b70"/></svg>
<svg style="left:1441px;top:192px" width="31" height="26" viewBox="1441 192 31 26"><ellipse cx="1456.4" cy="202.6" rx="11.8" ry="7.8" fill="none" stroke="#696b70" stroke-width="1.5"/><circle cx="1452.8" cy="209.2" r="2" fill="#2f3237" stroke="#696b70" stroke-width="1.4"/><path d="M1453.6,211 L1455,214.6" fill="none" stroke="#696b70" stroke-width="1.4" stroke-linecap="round"/></svg>
<svg style="left:1484.15px;top:199.76px;" width="16.5" height="10.875" viewBox="0 0 16.5 10.875"><path d="M2 2 L8.25 8.875 L14.5 2" fill="none" stroke="#fff" stroke-width="2.6" stroke-linecap="round" stroke-linejoin="round"/></svg>
<svg style="left:1529px;top:187px" width="36" height="36" viewBox="1529 187 36 36"><rect x="1532.6" y="190.8" width="28.4" height="28.4" rx="4.4" fill="none" stroke="#696b70" stroke-width="1.5" stroke-dasharray="4 2.2"/><path d="M1542.4,201 L1551.2,209.8 M1551.2,201 L1542.4,209.8" fill="none" stroke="#696b70" stroke-width="1.5"/></svg>
<svg style="left:1575.15px;top:199.76px;" width="16.5" height="10.875" viewBox="0 0 16.5 10.875"><path d="M2 2 L8.25 8.875 L14.5 2" fill="none" stroke="#fff" stroke-width="2.6" stroke-linecap="round" stroke-linejoin="round"/></svg>
<svg style="left:1620px;top:187px" width="35" height="35" viewBox="1620 187 35 35"><circle cx="1637.3" cy="204.5" r="14.4" fill="none" stroke="#696b70" stroke-width="1.5" stroke-dasharray="4.2 2"/><circle cx="1637.3" cy="204.5" r="9.8" fill="none" stroke="#696b70" stroke-width="1.7"/><path d="M1630.6,211.4 L1644.2,197.6" fill="none" stroke="#696b70" stroke-width="1.7"/></svg>
<div style="left:1680px;top:181px;width:49px;height:48px;background:#3fae17;border-radius:8px;"></div>
<svg style="left:1686px;top:187px" width="37" height="36" viewBox="1686 187 37 36"><rect x="1690.4" y="191" width="28" height="28" rx="7.4" fill="none" stroke="#eaffdf" stroke-width="2.4"/><path d="M1697.8,206 L1702.4,210.2 L1710.6,201" fill="none" stroke="#eaffdf" stroke-width="2.4" stroke-linecap="round" stroke-linejoin="round"/></svg>
<div style="left:1738px;top:181px;width:22px;height:48px;border:1px solid #34373c;border-radius:6px;box-sizing:border-box"></div>
<svg style="left:1744px;top:192px" width="10" height="26" viewBox="1744 192 10 26"><circle cx="1749" cy="197" r="3.1" fill="#fff"/><circle cx="1749" cy="205.2" r="3.1" fill="#fff"/><circle cx="1749" cy="213.6" r="3.1" fill="#fff"/></svg>
<div style="left:393px;top:1255px;width:54px;height:42px;background:#232428;border-radius:0 7px 7px 0;"></div>
<svg style="left:408px;top:1263px" width="24" height="26" viewBox="408 1263 24 26"><path d="M419.6,1265.4 Q420.8,1265.4 420.8,1266.8 Q426.4,1268.4 426.4,1275 Q426.4,1279.6 428.6,1281.6 Q429,1283.2 427.6,1283.2 H411.6 Q410.2,1283.2 410.6,1281.6 Q412.8,1279.6 412.8,1275 Q412.8,1268.4 418.4,1266.8 Q418.4,1265.4 419.6,1265.4 Z" fill="#1c84ff"/><path d="M417.4,1284.4 H421.8 Q421.6,1286.4 419.6,1286.4 Q417.6,1286.4 417.4,1284.4 Z" fill="#1c84ff"/></svg>
<div style="left:405px;top:1320px;width:20px;height:23px;background:#0c0c0e;border-radius:4px;"></div>
<span style="left:409.55px;top:1319.53px;font-size:19.60px;line-height:25px;color:#fff;font-weight:700;">0</span>
<div style="left:556.6px;top:1320px;width:20.0px;height:23px;background:#0c0c0e;border-radius:4px;"></div>
<span style="left:561.15px;top:1319.53px;font-size:19.60px;line-height:25px;color:#fff;font-weight:700;">1</span>
<div style="left:707.4px;top:1320px;width:20.0px;height:23px;background:#0c0c0e;border-radius:4px;"></div>
<span style="left:711.95px;top:1319.53px;font-size:19.60px;line-height:25px;color:#fff;font-weight:700;">2</span>
<div style="left:406px;top:1348px;width:321px;height:13px;background:#050505;"></div>
<div style="left:406.0px;top:1349px;width:31.399999999999977px;height:5px;background:#e4e4e4;"></div>
<div style="left:438.1px;top:1355px;width:31.399999999999977px;height:5px;background:#e4e4e4;"></div>
<div style="left:470.2px;top:1349px;width:31.400000000000034px;height:5px;background:#e4e4e4;"></div>
<div style="left:502.3px;top:1355px;width:31.400000000000034px;height:5px;background:#e4e4e4;"></div>
<div style="left:534.4px;top:1349px;width:31.399999999999977px;height:5px;background:#e4e4e4;"></div>
<div style="left:566.5px;top:1355px;width:31.399999999999977px;height:5px;background:#e4e4e4;"></div>
<div style="left:598.6px;top:1349px;width:31.399999999999977px;height:5px;background:#e4e4e4;"></div>
<div style="left:630.7px;top:1355px;width:31.399999999999977px;height:5px;background:#e4e4e4;"></div>
<div style="left:662.8px;top:1349px;width:31.40000000000009px;height:5px;background:#e4e4e4;"></div>
<div style="left:694.9px;top:1355px;width:31.399999999999977px;height:5px;background:#e4e4e4;"></div>
<svg style="left:2300px;top:1156px" width="260" height="110" viewBox="2300 1156 260 110"><polygon points="2351.1,1156 2366.6,1156 2410.2,1180 2453.2,1156 2470.1,1156 2470.1,1215.8 2410.2,1250 2351.1,1213" fill="#222327"/><path d="M2351.1,1156 V1213 L2410.2,1250 L2470.1,1215.8 V1156 M2410.2,1250 V1180 L2366.6,1156 M2410.2,1180 L2453.2,1156" fill="none" stroke="#4b4d52" stroke-width="1.2"/><path d="M2512.4,1156 Q2514,1163 2513.8,1170 L2526.4,1170.4 Q2527,1163 2525.6,1156" fill="#27282c" stroke="#45474c" stroke-width="1.2"/><path d="M2513.6,1180.2 L2526.6,1180.8 Q2525,1204 2509.6,1214.4 L2517.8,1221.8 L2489.8,1225.4 L2496.4,1201.8 L2502.6,1207.4 Q2512.2,1197.6 2513.6,1180.2 Z" fill="#27282c" stroke="#45474c" stroke-width="1.2" stroke-linejoin="round"/><path d="M2335,1223.6 L2351.6,1214.6" stroke="#f26d6d" stroke-width="4.6" stroke-linecap="round"/><path d="M2469.2,1214.6 L2485.6,1223.6" stroke="#5bc96b" stroke-width="4.6" stroke-linecap="round"/><text transform="matrix(0.86,0.5,0,1,2380.4,1197.4)" text-anchor="middle" font-family="'Liberation Sans', sans-serif" font-size="11.6" font-weight="700" fill="#8d8f94" letter-spacing="0.6" dy="3.6">RIGHT</text><text transform="matrix(0.86,-0.5,0,1,2440.2,1197)" text-anchor="middle" font-family="'Liberation Sans', sans-serif" font-size="11.6" font-weight="700" fill="#8d8f94" letter-spacing="0.6" dy="3.6">BACK</text></svg>
<span style="left:2313.54px;top:1219.14px;font-size:21.00px;line-height:27px;color:#fff;">X</span>
<span style="left:2493.19px;top:1219.14px;font-size:21.00px;line-height:27px;color:#fff;">Y</span>
<svg style="left:2332px;top:1308px" width="40" height="16" viewBox="2332 1308 40 16"><path d="M2336.6,1312.4 V1319.6 M2352.2,1312.4 V1319.6 M2367.6,1312.4 V1319.6" stroke="#fff" stroke-width="1.6"/><path d="M2336.6,1314.8 H2352 M2336.6,1317.2 H2352" stroke="#fff" stroke-width="1"/><rect x="2352.2" y="1314" width="15.4" height="4" fill="#fff"/></svg>
<svg style="left:2408px;top:1298px" width="38" height="34" viewBox="2408 1298 38 34"><path d="M2422.6,1306 L2426.7,1302.2 L2430.8,1306 M2413.8,1321.6 L2413,1326.6 L2418.4,1327.4 M2439.6,1321.6 L2440.4,1326.6 L2435,1327.4" fill="none" stroke="#9a9ca1" stroke-width="1.5" stroke-linecap="round" stroke-linejoin="round"/><circle cx="2426.7" cy="1318.6" r="1.3" fill="#9a9ca1"/></svg>
<svg style="left:2484px;top:1298px" width="37" height="36" viewBox="2484 1298 37 36"><path d="M2502.6,1302.6 L2516.2,1307.6 V1323.4 L2502.6,1329 L2489,1323.4 V1307.6 Z M2489,1307.6 L2502.6,1312.4 L2516.2,1307.6 M2502.6,1312.4 V1329 M2489,1323.4 L2502.6,1318.6 L2516.2,1323.4 M2502.6,1318.6 V1302.6" fill="none" stroke="#f0f0f2" stroke-width="1.6" stroke-linejoin="round"/></svg>
<div style="left:2046px;top:176px;width:514px;height:980px;background:#34363a;"></div>
<div style="left:2047px;top:176px;width:513px;height:979px;background:#232428;"></div>
<div style="left:2047px;top:177px;width:513px;height:31px;background:#000;"></div>
<svg style="left:2056.70px;top:188.12px;" width="13" height="8.95" viewBox="0 0 13 8.95"><path d="M2 2 L6.5 6.95 L11 2" fill="none" stroke="#fff" stroke-width="3" stroke-linecap="round" stroke-linejoin="round"/></svg>
<span style="left:2091.70px;top:180.43px;font-size:19.74px;line-height:26px;color:#fff;font-weight:700;">Create Simple Objects</span>
<div style="left:2467px;top:183px;width:54px;height:21px;background:#3fa01b;border-radius:3px;"></div>
<span style="left:2472.60px;top:183.29px;font-size:16.38px;line-height:21px;color:#fff;">HELP</span>
<svg style="left:2533px;top:184px" width="19" height="19" viewBox="2533 184 19 19"><path d="M2537.2,188 L2547.6,198.4 M2547.6,188 L2537.2,198.4" fill="none" stroke="#fff" stroke-width="3.7" stroke-linecap="round"/></svg>
<div style="left:2058px;top:224px;width:238px;height:120px;background:#2f3237;border-radius:8px;"></div>
<div style="left:2308px;top:224px;width:238px;height:120px;background:#1c84ff;border-radius:8px;"></div>
<svg style="left:2158px;top:242px" width="42" height="48" viewBox="2158 242 42 48"><path d="M2162.6,250.6 V279.6 Q2162.6,284 2178,284 Q2193.4,284 2193.4,279.6 V250.6 Z" fill="#5b5d62"/><path d="M2162.6,251 V279.6 Q2162.6,284 2178,284 Q2193.4,284 2193.4,279.6 V251" fill="none" stroke="#fff" stroke-width="1.6" stroke-dasharray="2.6 1.8"/><ellipse cx="2178" cy="251" rx="15.4" ry="4.4" fill="#5b5d62" stroke="#fff" stroke-width="1.8"/><circle cx="2191" cy="279.8" r="5.2" fill="#fff"/></svg>
<span style="left:2127.50px;top:302.64px;font-size:21.20px;line-height:28px;color:#fff;letter-spacing:0.020px;">Interactive</span>
<svg style="left:2405px;top:246px" width="45" height="40" viewBox="2405 246 45 40"><path d="M2409.6,253 H2433.2000000000003 M2440.4,253 H2444.6" fill="none" stroke="#fff" stroke-width="1.9" stroke-linecap="round"/><circle cx="2436.8" cy="253" r="3.5" fill="none" stroke="#fff" stroke-width="1.9"/><path d="M2409.6,265.2 H2414.4 M2421.6,265.2 H2444.6" fill="none" stroke="#fff" stroke-width="1.9" stroke-linecap="round"/><circle cx="2418" cy="265.2" r="3.5" fill="none" stroke="#fff" stroke-width="1.9"/><path d="M2409.6,277.6 H2427.8 M2435.0,277.6 H2444.6" fill="none" stroke="#fff" stroke-width="1.9" stroke-linecap="round"/><circle cx="2431.4" cy="277.6" r="3.5" fill="none" stroke="#fff" stroke-width="1.9"/></svg>
<span style="left:2355.60px;top:303.63px;font-size:19.85px;line-height:26px;color:#fff;">Use Parameters</span>
<div style="left:2052px;top:409px;width:501px;height:1px;background:#3b8f22;"></div>
<div style="left:2058px;top:369.5px;width:85px;height:40.5px;background:#3dab18;border-radius:7px 7px 0 0;"></div>
<div style="left:2154px;top:369.5px;width:107px;height:39.5px;background:linear-gradient(#414348,#3b3d42);border-radius:7px 7px 0 0;"></div>
<div style="left:2273px;top:369.5px;width:74px;height:39.5px;background:linear-gradient(#414348,#3b3d42);border-radius:7px 7px 0 0;"></div>
<span style="left:2065.80px;top:376.23px;font-size:20.12px;line-height:26px;color:#eaffdc;">Objects</span>
<span style="left:2162.00px;top:375.74px;font-size:20.78px;line-height:27px;color:#e8e8e8;letter-spacing:0.109px;">Primitives</span>
<span style="left:2281.00px;top:376.23px;font-size:19.68px;line-height:26px;color:#e8e8e8;">Labels</span>
<div style="left:2058px;top:434px;width:154px;height:105px;background:#1c84ff;border-radius:8px;"></div>
<span style="left:2111.20px;top:500.43px;font-size:19.75px;line-height:26px;color:#fff;">Cube</span>
<div style="left:2224px;top:434px;width:155px;height:105px;background:#2f3237;border-radius:8px;"></div>
<span style="left:2263.20px;top:499.94px;font-size:20.72px;line-height:27px;color:#fff;">Cylinder</span>
<div style="left:2391px;top:434px;width:154px;height:105px;background:#2f3237;border-radius:8px;"></div>
<span style="left:2435.60px;top:500.43px;font-size:20.10px;line-height:26px;color:#fff;">Sphere</span>
<div style="left:2058px;top:552px;width:154px;height:105px;background:#2f3237;border-radius:8px;"></div>
<span style="left:2108.60px;top:617.74px;font-size:20.78px;line-height:27px;color:#fff;letter-spacing:0.301px;">Torus</span>
<div style="left:2224px;top:552px;width:155px;height:105px;background:#2f3237;border-radius:8px;"></div>
<span style="left:2273.60px;top:617.74px;font-size:20.78px;line-height:27px;color:#fff;letter-spacing:0.039px;">Arrow</span>
<div style="left:2391px;top:552px;width:154px;height:105px;background:#2f3237;border-radius:8px;"></div>
<span style="left:2442.60px;top:618.23px;font-size:19.96px;line-height:26px;color:#fff;">Prism</span>
<svg style="left:2115px;top:450px" width="40" height="38" viewBox="2115 450 40 38"><path d="M2134.8,454.6 L2149.2,460.6 V476.6 L2134.8,482.6 L2120.6,476.6 V460.6 Z M2120.6,460.6 L2134.8,466.8" fill="none" stroke="#fff" stroke-width="1.9" stroke-linejoin="round"/><path d="M2134.8,466.8 L2149.2,460.6 V476.6 L2134.8,482.6 Z" fill="#fff"/></svg>
<svg style="left:2286px;top:451px" width="31" height="36" viewBox="2286 451 31 36"><path d="M2291,459 V477.6 Q2291,481.4 2301.2,481.4 Q2311.4,481.4 2311.4,477.6 V459" fill="none" stroke="#fff" stroke-width="1.6"/><ellipse cx="2301.2" cy="459" rx="10.2" ry="3.6" fill="none" stroke="#fff" stroke-width="1.6"/><path d="M2295.4,475.6 H2307.4" fill="none" stroke="#fff" stroke-width="1.4" stroke-dasharray="1.8 1.8"/></svg>
<svg style="left:2452px;top:452px" width="33" height="33" viewBox="2452 452 33 33"><circle cx="2468.4" cy="468.4" r="13" fill="none" stroke="#fff" stroke-width="1.6"/><path d="M2455.4,468.4 Q2468.4,473.6 2481.4,468.4 M2468.4,455.4 Q2463.2,468.4 2468.4,481.4" fill="none" stroke="#fff" stroke-width="1.4"/><path d="M2455.4,468.4 Q2468.4,464.4 2481.4,468.4 M2468.4,455.4 Q2472.4,468.4 2468.4,481.4" fill="none" stroke="#fff" stroke-width="1.2" stroke-dasharray="2.2 1.8"/></svg>
<svg style="left:2115px;top:574px" width="40" height="26" viewBox="2115 574 40 26"><ellipse cx="2134.8" cy="587.5" rx="16.8" ry="9.2" fill="none" stroke="#fff" stroke-width="1.6"/><path d="M2123.6,584.6 Q2134.8,594.2 2146,584.6 M2127.2,586.8 Q2134.8,583 2142.4,586.8" fill="none" stroke="#fff" stroke-width="1.5" stroke-linecap="round"/></svg>
<svg style="left:2288px;top:574px" width="26" height="26" viewBox="2288 574 26 26"><path d="M2293.2,594.8 L2304.6,583.4" fill="none" stroke="#fff" stroke-width="2.7" stroke-linecap="round"/><path d="M2299.4,580.6 L2310,578 L2307.6,588.6 Z" fill="#fff" stroke="#fff" stroke-width="0.8" stroke-linejoin="round"/></svg>
<svg style="left:2450px;top:569px" width="36" height="35" viewBox="2450 569 36 35"><path d="M2455.6,573.6 L2481.8,573.2 V592.6 L2466.4,600.4 L2455.6,593.4 Z M2455.6,573.6 L2466.4,580.6 L2481.8,573.2 M2466.4,580.6 V600.4" fill="none" stroke="#fff" stroke-width="1.7" stroke-linejoin="round"/><path d="M2461,592 H2476" fill="none" stroke="#fff" stroke-width="1.3" stroke-dasharray="2.2 1.8"/></svg>
<div style="left:2058px;top:682px;width:26px;height:26px;background:linear-gradient(#1f86fb,#1263d6);border-radius:4px;"></div>
<svg style="left:2058px;top:682px" width="26" height="26" viewBox="2058 682 26 26"><path d="M2064.4,694.2 L2069.8,701.6 L2078.2,689" fill="none" stroke="#fff" stroke-width="2.7" stroke-linecap="round" stroke-linejoin="round"/></svg>
<span style="left:2102.40px;top:681.14px;font-size:20.55px;line-height:27px;color:#e8e8e8;">Parallelepiped</span>
<div style="left:2059px;top:732px;width:124px;height:42px;background:#000;border-radius:7px;"></div>
<span style="left:2095.40px;top:740.83px;font-size:20.33px;line-height:26px;color:#fff;">1 mm</span>
<div style="left:2196px;top:732px;width:124px;height:42px;background:#000;border-radius:7px;"></div>
<span style="left:2232.40px;top:740.83px;font-size:20.33px;line-height:26px;color:#fff;">5 mm</span>
<div style="left:2333px;top:732px;width:124px;height:42px;background:#000;border-radius:7px;"></div>
<span style="left:2369.40px;top:740.83px;font-size:20.33px;line-height:26px;color:#fff;">2 mm</span>
<span style="left:2470.80px;top:741.32px;font-size:18.85px;line-height:25px;color:#e8e8e8;">Edge #0</span>
<div style="left:2059px;top:788px;width:124px;height:42px;background:#000;border-radius:7px;"></div>
<span style="left:2095.40px;top:796.83px;font-size:20.33px;line-height:26px;color:#fff;">2 mm</span>
<div style="left:2196px;top:788px;width:124px;height:42px;background:#000;border-radius:7px;"></div>
<span style="left:2232.40px;top:796.83px;font-size:20.33px;line-height:26px;color:#fff;">3 mm</span>
<div style="left:2333px;top:788px;width:124px;height:42px;background:#000;border-radius:7px;"></div>
<span style="left:2369.40px;top:796.83px;font-size:20.33px;line-height:26px;color:#fff;">7 mm</span>
<span style="left:2470.80px;top:797.81px;font-size:18.58px;line-height:24px;color:#e8e8e8;">Edge #1</span>
<div style="left:2059px;top:844px;width:124px;height:42px;background:#000;border-radius:7px;"></div>
<span style="left:2095.40px;top:852.83px;font-size:20.33px;line-height:26px;color:#fff;">4 mm</span>
<div style="left:2196px;top:844px;width:124px;height:42px;background:#000;border-radius:7px;"></div>
<span style="left:2232.40px;top:852.83px;font-size:20.33px;line-height:26px;color:#fff;">4 mm</span>
<div style="left:2333px;top:844px;width:124px;height:42px;background:#000;border-radius:7px;"></div>
<span style="left:2369.40px;top:852.83px;font-size:20.33px;line-height:26px;color:#fff;">3 mm</span>
<span style="left:2470.80px;top:853.32px;font-size:18.85px;line-height:25px;color:#e8e8e8;">Edge #2</span>
<div style="left:2059px;top:924px;width:124px;height:43px;background:#000;border-radius:7px;"></div>
<span style="left:2095.40px;top:933.33px;font-size:20.33px;line-height:26px;color:#fff;">1 mm</span>
<div style="left:2196px;top:924px;width:124px;height:43px;background:#000;border-radius:7px;"></div>
<span style="left:2232.40px;top:933.33px;font-size:20.33px;line-height:26px;color:#fff;">0 mm</span>
<div style="left:2333px;top:924px;width:124px;height:43px;background:#000;border-radius:7px;"></div>
<span style="left:2369.40px;top:933.33px;font-size:20.33px;line-height:26px;color:#fff;">0 mm</span>
<span style="left:2470.80px;top:933.33px;font-size:20.07px;line-height:26px;color:#e8e8e8;">Center</span>
<div style="left:2058px;top:905px;width:489px;height:1px;background:#34363a;"></div>
<div style="left:2059px;top:980px;width:398px;height:43px;background:#000;border-radius:7px;"></div>
<span style="left:2064.60px;top:988.34px;font-size:20.56px;line-height:27px;color:#fff;letter-spacing:0.007px;">Parallelepiped0</span>
<span style="left:2470.80px;top:988.83px;font-size:20.10px;line-height:26px;color:#e8e8e8;">Name</span>
<div style="left:2058px;top:1047px;width:26px;height:26px;background:linear-gradient(#1f86fb,#1263d6);border-radius:4px;"></div>
<svg style="left:2058px;top:1047px" width="26" height="26" viewBox="2058 1047 26 26"><path d="M2064.4,1059.2 L2069.8,1066.6 L2078.2,1054" fill="none" stroke="#fff" stroke-width="2.7" stroke-linecap="round" stroke-linejoin="round"/></svg>
<span style="left:2102.40px;top:1047.43px;font-size:20.21px;line-height:26px;color:#e8e8e8;">Show Preview</span>
<div style="left:2058px;top:1097px;width:489px;height:43px;background:linear-gradient(#1c84ff,#1673ea 50%,#0d59c6);border-radius:7px;box-shadow:0 1px 2px rgba(0,0,0,.5);"></div>
<span style="left:2272.00px;top:1105.63px;font-size:20.13px;line-height:26px;color:#fff;">Create</span>
<div style="left:2559px;top:0px;width:1px;height:1368px;background:#2a2b2f;"></div>
<div style="left:2536px;top:1344px;width:24px;height:24px;background:radial-gradient(circle at 0 0, transparent 23px, #2b2c30 24.5px)"></div>
<div style="left:0;top:1361px;width:7px;height:7px;background:radial-gradient(circle at 100% 0, transparent 6.5px, #3f8c88 7.5px)"></div>
</div></body></html>
